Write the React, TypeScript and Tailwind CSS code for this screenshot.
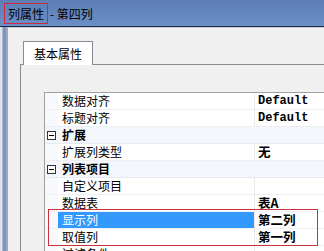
const rows = [
  { kind: "item", name: "数据对齐", value: "Default" },
  { kind: "item", name: "标题对齐", value: "Default" },
  { kind: "cat", name: "扩展" },
  { kind: "item", name: "扩展列类型", value: "无" },
  { kind: "cat", name: "列表项目" },
  { kind: "item", name: "自定义项目", value: "" },
  { kind: "item", name: "数据表", value: "表A" },
  { kind: "item", name: "显示列", value: "第二列", selected: true },
  { kind: "item", name: "取值列", value: "第一列" },
  { kind: "item", name: "过滤条件", value: "" },
];

const cjk = "font-['Noto_Sans_CJK_SC','Noto_Sans',sans-serif]";

function MinusBox() {
  return (
    <svg width="9" height="9" viewBox="0 0 9 9" className="block">
      <rect x="0.5" y="0.5" width="8" height="8" fill="#fff" stroke="#333" />
      <path d="M2 4.5h5" stroke="#000" />
    </svg>
  );
}

export default function App() {
  return (
    <div className={`relative w-[324px] h-[251px] overflow-hidden bg-[#f0f0f0] flex flex-col ${cjk}`}>
      {/* title bar */}
      <div className="h-[26px] shrink-0 bg-[linear-gradient(to_bottom,#5d7fb6,#6a8ec7)] flex items-start pt-[3px] pl-[4px]">
        <div className="flex items-center text-[12px] leading-[20px] text-black">
          <span className="border-[1.5px] border-[#d0283c] px-[3px] h-[21px] flex items-center">列属性</span>
          <span className="pl-[2px]">- 第四列</span>
        </div>
      </div>
      <div className="h-px shrink-0 bg-[#1c283d]" />

      <div className="flex-1 flex">
        {/* left frame */}
        <div className="w-[7px] shrink-0 bg-[linear-gradient(to_right,#dde2ea_0%,#dde2ea_25%,#8298bb_45%,#7c93b7_85%,#b6c0d0_100%)]" />
        <div className="flex-1 border-l border-[#a5a9b0] border-t border-t-[#c9d0dc] pl-[12px] pt-[13px] flex flex-col">
          {/* tab header */}
          <div className="flex pl-[3px]">
            <div className="relative z-10 -mb-px w-[70px] h-[24px] bg-white border border-b-0 border-[#898c95] flex items-center justify-center text-[12px] text-black">
              基本属性
            </div>
          </div>
          {/* tab panel */}
          <div className="flex-1 border-t border-l border-[#898c95] bg-[#f0f0f0] pl-[23px] pt-[27px]">
            <div className="border-t border-l border-[#a0a0a0] bg-white">
              {rows.map((r, i) =>
                r.kind === "cat" ? (
                  <div key={i} className="h-[17px] flex items-center bg-[#f3f6fb] border-b border-[#e6eaf1]">
                    <div className="w-[13px] shrink-0 flex items-center pl-[2px]">
                      <MinusBox />
                    </div>
                    <div className="pl-[4px] text-[12px] font-bold text-black leading-none">{r.name}</div>
                  </div>
                ) : (
                  <div key={i} className="h-[17px] flex border-b border-[#eceff4]">
                    <div className="w-[13px] shrink-0 bg-[#f7f9fc]" />
                    <div
                      className={`w-[196px] shrink-0 flex items-center pl-[4px] text-[12px] leading-none ${
                        r.selected ? "bg-[#3399ff] text-white" : "text-black"
                      }`}
                    >
                      {r.name}
                    </div>
                    <div
                      className={`flex-1 flex items-center pl-[3px] border-l border-[#eaeaea] text-black font-bold leading-none ${
                        r.value === "Default" ? "font-['Liberation_Mono',monospace] text-[12px]" : "text-[12.5px]"
                      }`}
                    >
                      {r.value}
                    </div>
                  </div>
                )
              )}
            </div>
          </div>
        </div>
      </div>

      {/* annotation box */}
      <div className="absolute left-[48px] top-[209px] w-[270px] h-[37px] border-[1.5px] border-[#c8323f]" />
    </div>
  );
}
